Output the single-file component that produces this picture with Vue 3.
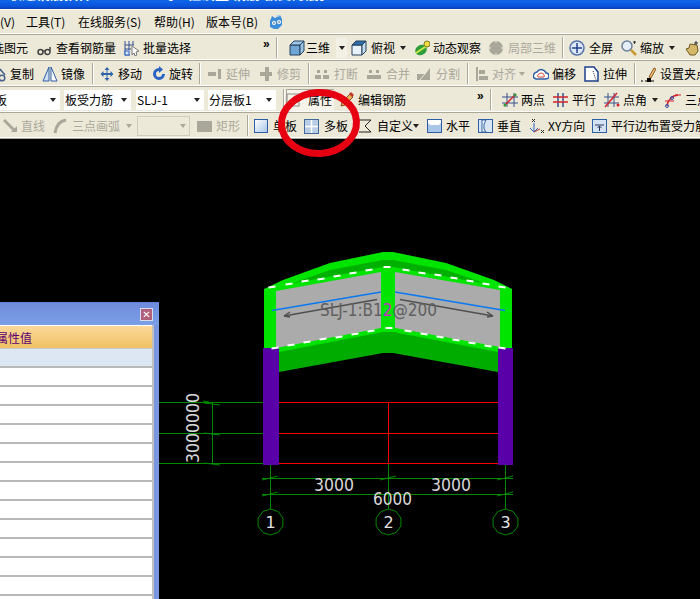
<script setup>
const icons = {
  logo: '<path d="M2 7l2-5 3 2 5-3 2 4v6l-4 4H6l-4-2z" fill="#3f8fd8"/><path d="M8 1l3 2 1-2z" fill="#a8d8f4"/><circle cx="6" cy="9" r="2" fill="#fff"/><circle cx="11" cy="8" r="2" fill="#fff"/><circle cx="6" cy="9" r=".8" fill="#1c4f8c"/><circle cx="11" cy="8" r=".8" fill="#1c4f8c"/>',
  glasses: '<path d="M1 12a2.500 2.500 0 1 0 5 0 2.500 2.500 0 1 0-5 0zM8 12a2.500 2.500 0 1 0 5 0 2.500 2.500 0 1 0-5 0zM6 11l2 0M13 12V7" fill="none" stroke="#444" stroke-width="1.500"/>',
  batch: '<path d="M1 1v14h5M1 5h9M1 9h6M5 1v9M9 1v4" stroke="#35518e" fill="none"/><rect x="1" y="11" width="4" height="4" fill="#d8e4f4" stroke="#2a62c8"/><path d="M8 6l7 5-3 1 1 3-2 1-1-3-2 2z" fill="#fff" stroke="#777"/>',
  cube: '<path d="M1 5h10v10H1z" fill="#6fa6d6" stroke="#26405f"/><path d="M1 5l4-4h10l-4 4zM11 5l4-4v10l-4 4z" fill="#9cc4e4" stroke="#26405f"/>',
  cubeTop: '<path d="M1 5h10v10H1z" fill="#e8f2fb" stroke="#26405f"/><path d="M1 5l4-4h10l-4 4z" fill="#2f6fa8" stroke="#26405f"/><path d="M11 5l4-4v10l-4 4z" fill="#c4dcf0" stroke="#26405f"/>',
  orbit: '<ellipse cx="7" cy="10" rx="6" ry="5" fill="#2f9e3a" transform="rotate(-30 7 10)"/><path d="M2 13l12-8" stroke="#c9e84a" stroke-width="2"/><circle cx="13" cy="4" r="3" fill="#f0dc40" stroke="#7f7a20"/>',
  partial: '<circle cx="8" cy="8" r="7" fill="#a9a69a"/><path d="M8 1v2M8 13v2M1 8h2M13 8h2" stroke="#ece9d8"/>',
  full: '<circle cx="8" cy="8" r="7" fill="#dfe8f6" stroke="#5474ab" stroke-width="1.500"/><path d="M8 3v10M3 8h10" stroke="#24408f" stroke-width="1.500"/>',
  zoom: '<circle cx="6" cy="6" r="5" fill="#e6eefa" stroke="#6c7f9c" stroke-width="1.500"/><path d="M10 10l5 5" stroke="#c99b2e" stroke-width="2.500"/><path d="M12 2h3M13.500 1v3" stroke="#333"/>',
  hand: '<path d="M2 9l3-1 1-4 7 1 1 6-3 4H6z" fill="#d6b86a" stroke="#6d5a22"/><path d="M12 1v4M10 3h4" stroke="#333"/>',
  copy: '<path d="M9 3l5 6" stroke="#48628c" stroke-width="1.500"/><circle cx="11" cy="12" r="2.800" fill="none" stroke="#48628c" stroke-width="1.500"/>',
  mirror: '<path d="M7 1L1 15h6z" fill="#cfe0f3" stroke="#2e5fa6"/><path d="M9 1l6 14H9z" fill="#fff" stroke="#2e5fa6"/>',
  move: '<path d="M8 1l2.500 3h-2v3h3V5l3 3-3 3V9h-3v3h2L8 15l-2.500-3h2V9h-3v2l-3-3 3-3v2h3V4h-2z" fill="#2f64a8"/>',
  rotate: '<path d="M8 2a6 6 0 1 0 6 6h-3a3 3 0 1 1-3-3v2l4-3.500L8 0z" fill="#2a63c4"/>',
  extend: '<path d="M1 6h8v4H1zM11 3h3v10h-3z" fill="#a9a69a"/>',
  trim: '<path d="M1 6h12v4H1zM6 1h4v14H6z" fill="#a9a69a"/>',
  break: '<path d="M1 9h6v4H1zM9 9h6v4H9zM3 4h3v3H3zM10 4h3v3h-3z" fill="#a9a69a"/>',
  merge: '<path d="M1 9h14v4H1zM3 4h3v3H3zM10 4h3v3h-3z" fill="#a9a69a"/>',
  split: '<path d="M1 14V8h8l5-6v12z" fill="#a9a69a"/><path d="M4 14l8-10" stroke="#ece9d8"/>',
  align: '<path d="M1 1h2v14H1zM4 4h6v4H4zM4 10h9v4H4z" fill="#a9a69a"/>',
  offset: '<path d="M1 12a4 4 0 0 1 3-6 5 5 0 0 1 9 1 3 3 0 0 1 0 6H3z" fill="#fff" stroke="#2e5fa6" stroke-width="1.500"/><path d="M5 11a2 2 0 0 1 1-3 3 3 0 0 1 5 1 2 2 0 0 1 0 2z" fill="none" stroke="#d2452e"/>',
  stretch: '<path d="M1 1h9l4 5v9H1z" fill="#fff" stroke="#1c3f8c" stroke-width="1.500"/><path d="M9 5l3 9" stroke="#2a2a2a" stroke-dasharray="1 1"/>',
  grip: '<path d="M1 15h2M5 15h2M11 15h3" stroke="#000"/><rect x="7" y="12" width="4" height="4" fill="#000"/><path d="M9 11l5-9 2 1-5 9z" fill="#efc06a" stroke="#8a5a28"/>',
  prop: '<rect x="1" y="2" width="12" height="12" fill="#f5f2e6" stroke="#8a8a8a"/><path d="M4 12l9-6 2 2-9 5z" fill="#e3a32b" stroke="#7a4d10"/>',
  edit: '<path d="M1 14l1-4 8-8 3 3-8 8z" fill="#e6b45a" stroke="#8a4a28"/><path d="M9 2l2-2 3 3-2 2z" fill="#c0392b"/>',
  twoPt: '<path d="M5 1v14M12 1v14M0 5h16M0 11h16" stroke="#35518e"/><path d="M2 14L14 2" stroke="#d2232a" stroke-width="1.500"/><circle cx="3" cy="13" r="1.500" fill="#2f9e3a"/><circle cx="13" cy="3" r="1.500" fill="#2f9e3a"/>',
  parallel: '<path d="M5 1v14M10 1v14" stroke="#35518e" stroke-width="1.500"/><path d="M0 5h15M0 10h15" stroke="#d2232a" stroke-width="1.500"/>',
  angle: '<path d="M4 1v14M10 1v14M0 5h15M0 11h15" stroke="#35518e"/><path d="M1 15L13 1" stroke="#d2232a" stroke-width="1.500"/><circle cx="14" cy="13" r="1.500" fill="#d2232a"/>',
  three: '<path d="M2 14A12 12 0 0 1 13 3" fill="none" stroke="#d2232a" stroke-width="1.500"/><circle cx="2" cy="14" r="1.500" fill="none" stroke="#2a4fa8"/><circle cx="7" cy="6" r="1.500" fill="none" stroke="#2a4fa8"/><path d="M10 3h6M0 9h9" stroke="#d2232a"/>',
  line: '<path d="M1 2l11 11" stroke="#a9a69a" stroke-width="3"/><path d="M14 8v6H8z" fill="#a9a69a"/>',
  arc: '<path d="M2 15C3 8 7 3 13 2" fill="none" stroke="#a9a69a" stroke-width="3"/>',
  rect: '<rect x="0" y="3" width="15" height="11" fill="#a9a69a"/>',
  single: '<rect x="0.500" y="1.500" width="13" height="13" fill="url(#pane)" stroke="#2e5fa6"/>',
  multi: '<rect x="0.500" y="1.500" width="14" height="14" fill="#b9cde6" stroke="#44699b"/><path d="M7.500 2v13M1 8.500h13" stroke="#fff" stroke-width="1.500"/>',
  custom: '<path d="M0 2h12L6 8l6 6H0" fill="none" stroke="#222"/>',
  horiz: '<rect x="0.500" y="1.500" width="14" height="13" fill="#a9c6e8" stroke="#2e5fa6"/><path d="M1 2h13v3l-2 2H3L1 5z" fill="#fff"/>',
  vert: '<rect x="0.500" y="1.500" width="14" height="13" fill="#d8e6f6" stroke="#2e5fa6"/><path d="M4 2h4L6 6v5l2 3H4z" fill="#fff" stroke="#2e5fa6"/>',
  xy: '<path d="M5 5v9M1 10l4 4 4-4" stroke="#2a63c4" fill="none"/><path d="M5 14l6-3" stroke="#c0392b"/><path d="M3 1l3 3M6 1L3 4M12 12l3 3M15 12l-3 3" stroke="#333"/>',
  pbar: '<rect x="0.500" y="1.500" width="14" height="13" fill="#d4e3f4" stroke="#2e5fa6"/><path d="M3 7h9M7.500 13V8M5.500 10l2-2 2 2" stroke="#23355e" fill="none"/>',
}

const rows = [
  {
    cls: 'menu',
    items: [
      { x: -24, t: '视图(V)', tx: -24 },
      { x: 26, t: '工具(T)', tx: 26 },
      { x: 78, t: '在线服务(S)', tx: 78 },
      { x: 154, t: '帮助(H)', tx: 154 },
      { x: 206, t: '版本号(B)', tx: 206 },
      { x: 268, i: 'logo', tx: 286 },
    ],
  },
  {
    items: [
      { x: -8, t: '选图元', tx: -8 },
      { x: 37, i: 'glasses', t: '查看钢筋量', tx: 56 },
      { x: 124, i: 'batch', t: '批量选择', tx: 143 },
      { x: 263, more: 1 },
      { x: 276, sep: 1 },
      { x: 289, i: 'cube', t: '三维', tx: 306 },
      { x: 336, drop: 1 },
      { x: 351, i: 'cubeTop', t: '俯视', tx: 371 },
      { x: 399, arrow: 1 },
      { x: 414, i: 'orbit', t: '动态观察', tx: 433 },
      { x: 488, i: 'partial', t: '局部三维', tx: 508, off: 1 },
      { x: 562, sep: 1 },
      { x: 569, i: 'full', t: '全屏', tx: 589 },
      { x: 621, i: 'zoom', t: '缩放', tx: 640 },
      { x: 668, arrow: 1 },
      { x: 684, i: 'hand', tx: 702 },
    ],
  },
  {
    items: [
      { x: -9, i: 'copy', t: '复制', tx: 10 },
      { x: 42, i: 'mirror', t: '镜像', tx: 61 },
      { x: 92, sep: 1 },
      { x: 99, i: 'move', t: '移动', tx: 118 },
      { x: 151, i: 'rotate', t: '旋转', tx: 169 },
      { x: 199, sep: 1 },
      { x: 207, i: 'extend', t: '延伸', tx: 226, off: 1 },
      { x: 259, i: 'trim', t: '修剪', tx: 277, off: 1 },
      { x: 308, sep: 1 },
      { x: 314, i: 'break', t: '打断', tx: 334, off: 1 },
      { x: 366, i: 'merge', t: '合并', tx: 386, off: 1 },
      { x: 416, i: 'split', t: '分割', tx: 436, off: 1 },
      { x: 467, sep: 1 },
      { x: 475, i: 'align', t: '对齐', tx: 492, off: 1 },
      { x: 518, arrow: 1, off: 1 },
      { x: 533, i: 'offset', t: '偏移', tx: 552 },
      { x: 584, i: 'stretch', t: '拉伸', tx: 603 },
      { x: 634, sep: 1 },
      { x: 640, i: 'grip', t: '设置夹点', tx: 660 },
    ],
  },
  {
    items: [
      { x: -30, combo: 1, w: 90, t: '现浇板', tx: -30 },
      { x: 64, combo: 1, w: 67, t: '板受力筋', tx: 64 },
      { x: 136, combo: 1, w: 68, t: 'SLJ-1', tx: 136 },
      { x: 208, combo: 1, w: 68, t: '分层板1', tx: 208 },
      { x: 283, sep: 1 },
      { x: 286, i: 'prop', t: '属性', tx: 308, on: 1 },
      { x: 340, i: 'edit', t: '编辑钢筋', tx: 358 },
      { x: 477, more: 1 },
      { x: 490, sep: 1 },
      { x: 502, i: 'twoPt', t: '两点', tx: 521 },
      { x: 553, i: 'parallel', t: '平行', tx: 572 },
      { x: 604, i: 'angle', t: '点角', tx: 623 },
      { x: 651, arrow: 1 },
      { x: 665, i: 'three', t: '三点', tx: 685 },
    ],
  },
  {
    items: [
      { x: 3, i: 'line', t: '直线', tx: 21, off: 1 },
      { x: 53, i: 'arc', t: '三点画弧', tx: 72, off: 1 },
      { x: 125, arrow: 1, off: 1 },
      { x: 137, combo: 1, w: 53, t: '', tx: 137, off: 1 },
      { x: 197, i: 'rect', t: '矩形', tx: 216, off: 1 },
      { x: 247, sep: 1 },
      { x: 254, i: 'single', t: '单板', tx: 273 },
      { x: 304, i: 'multi', t: '多板', tx: 324 },
      { x: 359, i: 'custom', t: '自定义', tx: 377 },
      { x: 412, arrow: 1 },
      { x: 427, i: 'horiz', t: '水平', tx: 446 },
      { x: 478, i: 'vert', t: '垂直', tx: 497 },
      { x: 529, i: 'xy', t: 'XY方向', tx: 548 },
      { x: 592, i: 'pbar', t: '平行边布置受力筋', tx: 611 },
    ],
  },
]

// width of each cell comes from where the next one starts
const cellStyle = (row, n) => {
  const item = row.items[n]
  const next = row.items[n + 1]
  return { width: (next ? next.x : 720) - item.x + 'px' }
}

const iconStyle = (item) => ({ width: item.tx - item.x + 'px' })

const panelRows = Array.from({ length: 14 }, (_, n) => n)

const axes = [
  { x: 270.5, n: '1' },
  { x: 388.5, n: '2' },
  { x: 505.5, n: '3' },
]
const hexPoints = (cx) =>
  Array.from({ length: 10 }, (_, n) => {
    const a = (n * Math.PI) / 5
    return `${(cx + 13 * Math.sin(a)).toFixed(1)},${(522 - 13 * Math.cos(a)).toFixed(1)}`
  }).join(' ')

// white dashes along the slab edges, centre points
const dashes = [
  [272, 287], [289, 284], [305, 281], [321, 279], [337, 276], [353, 273], [369, 270], [387, 267],
  [406, 270], [422, 273], [438, 275], [454, 278], [470, 281], [486, 284], [502, 287],
  [275, 348], [291, 345], [307, 342], [323, 339], [339, 337], [355, 334], [371, 331], [389, 328],
  [408, 331], [424, 334], [440, 337], [456, 340], [472, 343], [488, 346], [502, 348],
].map(([x, y]) => {
  const k = x < 384 ? -0.17 : x > 392 ? 0.17 : 0
  return { x1: x - 3.5, y1: y - 3.5 * k, x2: x + 3.5, y2: y + 3.5 * k }
})

const ticks = [
  [203, 401, 209, 402], [204, 403, 220, 405], [204, 433, 220, 435], [204, 463, 220, 465],
  [262, 480, 278, 476], [380, 480, 396, 476], [497, 480, 513, 476],
  [262, 496, 278, 492], [497, 496, 513, 492],
]
</script>

<template>
  <div class="app">
    <div class="titlebar"><span class="title-text">广联达钢筋抽样 GGJ2009 - [工程设置 钢筋 板受力筋]</span></div>

    <div v-for="(row, r) in rows" :key="r" class="row" :class="row.cls">
      <div class="row-inner" :style="{ marginLeft: row.items[0].x + 'px' }">
        <div
          v-for="(item, n) in row.items"
          :key="n"
          class="cell"
          :class="{ off: item.off }"
          :style="cellStyle(row, n)"
        >
          <span v-if="item.sep" class="sep"></span>
          <span v-else-if="item.more" class="more">»</span>
          <span v-else-if="item.arrow" class="arrow"></span>
          <span v-else-if="item.drop" class="drop"><span class="arrow dark"></span></span>
          <span v-else-if="item.combo" class="combo" :style="{ width: item.w + 'px' }">
            <span class="combo-text">{{ item.t }}</span>
            <span class="arrow dark"></span>
          </span>
          <span v-else class="tool" :class="{ on: item.on }">
            <span v-if="item.i" class="tool-icon" :style="iconStyle(item)">
              <svg width="16" height="16" viewBox="0 0 16 16" v-html="icons[item.i]"></svg>
            </span>
            <span v-if="item.t" class="tool-text">{{ item.t }}</span>
          </span>
        </div>
      </div>
    </div>

    <div class="canvas">
      <svg class="drawing" width="700" height="460" viewBox="0 139 700 460">
        <g stroke="#008a00" fill="none">
          <path d="M159 402.500H263M159 433.500H263M159 463.500H263M212.500 402V464" />
          <path d="M270.500 465V509M388.500 463V509M505.500 465V509M262 478.500H513M262 494.500H513" />
          <line v-for="(t, n) in ticks" :key="n" :x1="t[0]" :y1="t[1]" :x2="t[2]" :y2="t[3]" />
          <polygon v-for="a in axes" :key="a.n" :points="hexPoints(a.x)" />
        </g>
        <path d="M279 402.500H498M279 433.500H498M279 463.500H498M388.500 402V463" stroke="#f00000" fill="none" />

        <polygon points="264,289 283,280 330,263 383,252 393,252 446,263 494,280 512,289 512,348 500,348 500,366 388,340 276,366 276,348 264,348" fill="#00e400" />
        <polygon points="293,283 330,270 383,260 393,260 446,270 484,283 470,281 393,267 383,267 306,281" fill="#00b000" />
        <polygon points="279,352 383,332 393,332 498,352 498,372 393,353 383,353 279,372" fill="#00ac00" />
        <polygon points="276,291 381,272 381,328 276,348" fill="#ababab" />
        <polygon points="395,272 500,290 500,347 395,328" fill="#ababab" />
        <rect x="263" y="348" width="16" height="117" fill="#5a00a8" />
        <rect x="498" y="348" width="15" height="117" fill="#5a00a8" />

        <line v-for="(d, n) in dashes" :key="n" v-bind="d" stroke="#fff" stroke-width="2" />
        <path d="M272 310.500L381 292M395 292L505 310.500" stroke="#0a78f0" stroke-width="1.500" fill="none" />
        <g stroke="#505050" stroke-width="1.500" fill="none">
          <path d="M284 316L377 299.500M400 299.500L493 316" />
          <path d="M284 316l6-4M284 316l6 1M493 316l-6-4M493 316l-6 1" />
        </g>
        <text x="320" y="316" class="bar-label" textLength="117" lengthAdjust="spacingAndGlyphs">SLJ-1:B1<tspan fill="#c030c0">2</tspan>@200</text>

        <text class="dim" x="0" y="0" transform="translate(199 463) rotate(-90)" textLength="70" lengthAdjust="spacingAndGlyphs">3000000</text>
        <text class="dim" x="314" y="491" textLength="40" lengthAdjust="spacingAndGlyphs">3000</text>
        <text class="dim" x="431" y="491" textLength="40" lengthAdjust="spacingAndGlyphs">3000</text>
        <text class="dim" x="373" y="505" textLength="39" lengthAdjust="spacingAndGlyphs">6000</text>
        <text v-for="a in axes" :key="a.n" class="axis" :x="a.x" y="528">{{ a.n }}</text>
      </svg>

      <div class="panel">
        <div class="panel-title"><span class="close">✕</span></div>
        <div class="panel-body">
          <div class="panel-head"><span>属性值</span></div>
          <div class="panel-row blue"></div>
          <div v-for="n in panelRows" :key="n" class="panel-row"></div>
        </div>
      </div>
    </div>

    <svg class="ring" width="90" height="76" viewBox="0 0 90 76">
      <defs>
        <linearGradient id="pane" x1="0" y1="0" x2="1" y2="1">
          <stop offset="0" stop-color="#fff" />
          <stop offset="1" stop-color="#a9c6e8" />
        </linearGradient>
      </defs>
      <ellipse cx="45" cy="38" rx="37.500" ry="30.500" fill="none" stroke="#e60012" stroke-width="7" transform="rotate(-3 45 38)" />
    </svg>
  </div>
</template>

<style>
html,
body {
  margin: 0;
  background: #000;
}
</style>

<style scoped>
.app {
  position: relative;
  width: 700px;
  height: 599px;
  overflow: hidden;
  display: flex;
  flex-direction: column;
  background: #ece9d8;
  font-family: "Noto Sans CJK SC", "Liberation Sans", sans-serif;
  font-size: 12px;
  color: #000;
}

.titlebar {
  height: 9px;
  flex: none;
  overflow: hidden;
  background: linear-gradient(#0f68e8, #0a52dc 70%, #0a3fb0);
  border-bottom: 1px solid #f8f6ee;
}

.title-text {
  display: block;
  margin: -16px 0 0 -6px;
  color: #fff;
  font-size: 14px;
  font-weight: 700;
  line-height: 18px;
  white-space: nowrap;
}

.row {
  height: 25px;
  flex: none;
  overflow: hidden;
  border-bottom: 1px solid #aca899;
  box-shadow: inset 0 -1px 0 #fff;
}

.row.menu {
  height: 24px;
}

.row-inner {
  display: flex;
  height: 100%;
  align-items: center;
}

.cell {
  flex: none;
  display: flex;
  align-items: center;
  height: 100%;
  white-space: nowrap;
}

.off {
  color: #aba89c;
}

.tool {
  display: flex;
  align-items: center;
}

.tool.on {
  width: 48px;
  height: 22px;
  background: #f6f4ea;
  box-shadow: inset 1px 1px 0 #aca899;
}

.tool-icon {
  display: flex;
  flex: none;
}

.tool-text {
  line-height: 16px;
}

.sep {
  display: block;
  width: 1px;
  height: 21px;
  background: #aca899;
  border-right: 1px solid #fff;
}

.more {
  font: 700 12px "Liberation Sans", sans-serif;
  margin-top: -8px;
}

.arrow {
  display: block;
  width: 0;
  height: 0;
  margin-left: 1px;
  border: 3.500px solid transparent;
  border-top: 4px solid #222;
  border-bottom: 0;
}

.off .arrow {
  border-top-color: #aba89c;
}

.drop {
  display: flex;
  align-items: center;
  justify-content: center;
  width: 11px;
  height: 20px;
  background: #f3f1e6;
}

.combo {
  display: flex;
  align-items: center;
  justify-content: space-between;
  box-sizing: border-box;
  height: 20px;
  padding: 0 4px 0 1px;
  background: #fff;
  overflow: hidden;
}

.off .combo {
  background: #ece9d8;
  box-shadow: inset 0 0 0 1px #cfcdbe;
}

.combo-text {
  line-height: 16px;
}

.canvas {
  position: relative;
  flex: 1;
  background: #000;
  overflow: hidden;
}

.drawing {
  display: block;
}

.bar-label {
  font: 17px "DejaVu Sans", sans-serif;
  fill: #606060;
}

.dim {
  font: 17px "DejaVu Sans", sans-serif;
  fill: #d8d8d8;
}

.axis {
  font: 16px "DejaVu Sans", sans-serif;
  fill: #e4e4e4;
  text-anchor: middle;
}

.panel {
  position: absolute;
  left: 0;
  top: 163px;
  width: 159px;
  height: 297px;
  display: flex;
  flex-direction: column;
  box-sizing: border-box;
  background: #7a96df;
  border-top: 1px solid #5f7fd8;
}

.panel-title {
  flex: none;
  height: 22px;
  display: flex;
  justify-content: flex-end;
  align-items: center;
  background: linear-gradient(#6f8bdc, #7ba0e6);
}

.close {
  width: 13px;
  height: 13px;
  margin-right: 6px;
  background: #b0607a;
  border: 1px solid #d8dcf0;
  box-sizing: border-box;
  color: #fff;
  font: 700 10px/11px "DejaVu Sans", sans-serif;
  text-align: center;
}

.panel-body {
  flex: 1;
  width: 154px;
  box-sizing: border-box;
  padding-top: 1px;
  overflow: hidden;
  background: #fff;
  border-right: 2px solid #c0c0c0;
}

.panel-head {
  height: 22px;
  display: flex;
  align-items: center;
  overflow: hidden;
  color: #5c0070;
  background: linear-gradient(#fbd99a, #f1c066);
  border-bottom: 1px solid #c8c8c8;
}

.panel-head span {
  margin-left: -4px;
}

.panel-row {
  height: 17px;
  border-bottom: 2px solid #b8b8b8;
}

.panel-row.blue {
  background: #dde7f4;
}

.ring {
  position: absolute;
  left: 274px;
  top: 85px;
}
</style>
